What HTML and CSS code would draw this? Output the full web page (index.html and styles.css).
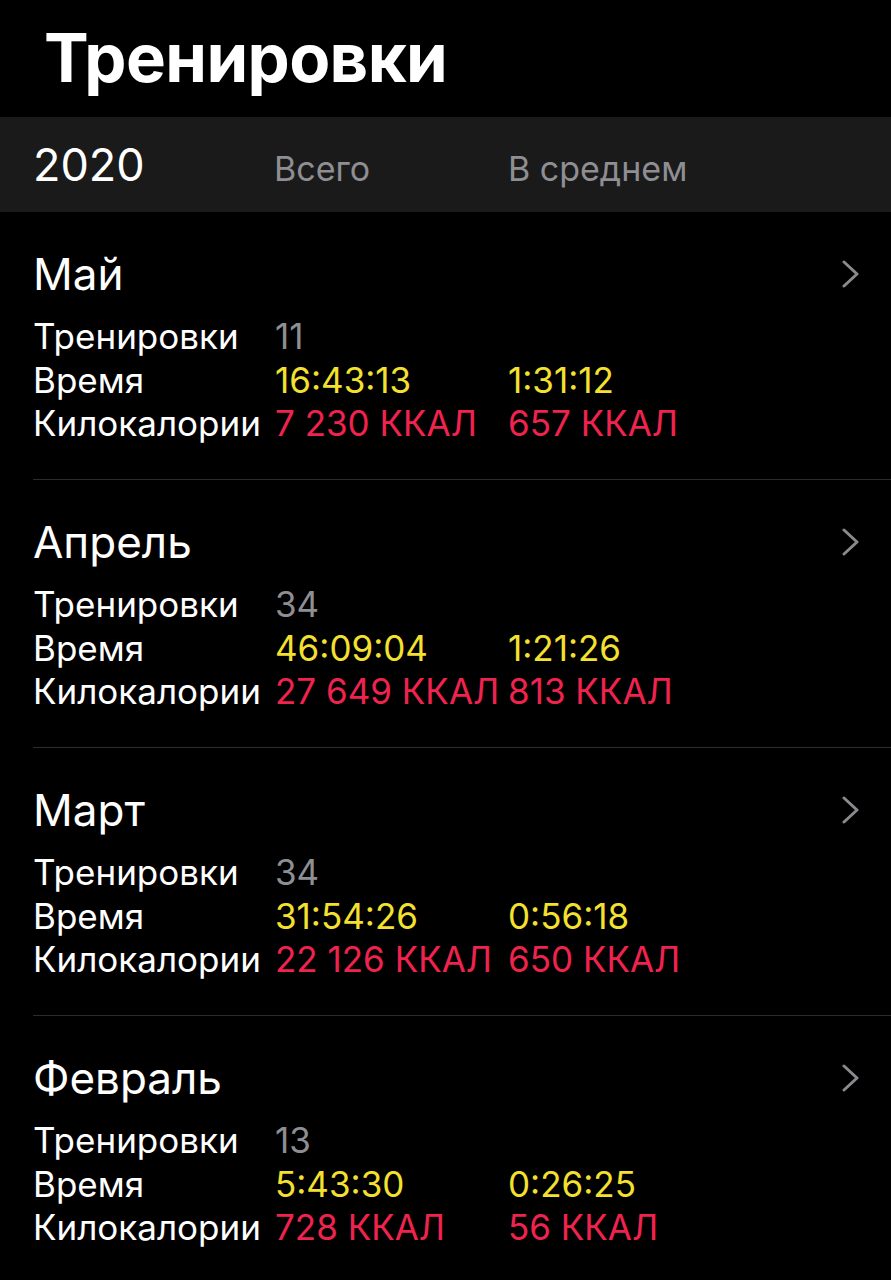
FILE: index.html
```html
<!DOCTYPE html>
<html lang="ru">
<head>
<meta charset="utf-8">
<title>Тренировки</title>
<link rel="stylesheet" href="styles.css">
</head>
<body>
<h1 class="title">Тренировки</h1>
<div class="band">
  <span class="year">2020</span>
  <span class="band-col">Всего</span>
  <span class="band-col">В среднем</span>
</div>
<main class="list">
  <section class="month">
    <div class="month-head"><span class="month-name">Май</span><svg class="chev" viewBox="0 0 20 28"><path d="M3 2 L16 14 L3 26"/></svg></div>
    <div class="stats">
      <span class="lbl">Тренировки</span><span class="cnt">11</span><span></span>
      <span class="lbl">Время</span><span class="time">16:43:13</span><span class="time">1:31:12</span>
      <span class="lbl">Килокалории</span><span class="kcal">7 230 ККАЛ</span><span class="kcal">657 ККАЛ</span>
    </div>
  </section>
  <section class="month">
    <div class="month-head"><span class="month-name">Апрель</span><svg class="chev" viewBox="0 0 20 28"><path d="M3 2 L16 14 L3 26"/></svg></div>
    <div class="stats">
      <span class="lbl">Тренировки</span><span class="cnt">34</span><span></span>
      <span class="lbl">Время</span><span class="time">46:09:04</span><span class="time">1:21:26</span>
      <span class="lbl">Килокалории</span><span class="kcal">27 649 ККАЛ</span><span class="kcal">813 ККАЛ</span>
    </div>
  </section>
  <section class="month">
    <div class="month-head"><span class="month-name">Март</span><svg class="chev" viewBox="0 0 20 28"><path d="M3 2 L16 14 L3 26"/></svg></div>
    <div class="stats">
      <span class="lbl">Тренировки</span><span class="cnt">34</span><span></span>
      <span class="lbl">Время</span><span class="time">31:54:26</span><span class="time">0:56:18</span>
      <span class="lbl">Килокалории</span><span class="kcal">22 126 ККАЛ</span><span class="kcal">650 ККАЛ</span>
    </div>
  </section>
  <section class="month">
    <div class="month-head"><span class="month-name">Февраль</span><svg class="chev" viewBox="0 0 20 28"><path d="M3 2 L16 14 L3 26"/></svg></div>
    <div class="stats">
      <span class="lbl">Тренировки</span><span class="cnt">13</span><span></span>
      <span class="lbl">Время</span><span class="time">5:43:30</span><span class="time">0:26:25</span>
      <span class="lbl">Килокалории</span><span class="kcal">728 ККАЛ</span><span class="kcal">56 ККАЛ</span>
    </div>
  </section>
</main>
</body>
</html>
```

FILE: styles.css
```css
* { box-sizing: border-box; }
html, body {
  margin: 0;
  padding: 0;
  background: #000;
  color: #fff;
  font-family: Inter, "Noto Sans", "Liberation Sans", sans-serif;
}
.title {
  margin: 0;
  padding: 17px 0 0 44px;
  height: 117px;
  font-size: 67px;
  font-weight: 700;
  line-height: 82px;
  letter-spacing: -0.6px;
}
.band {
  height: 95px;
  background: #1a1a1a;
  display: flex;
  align-items: baseline;
  padding: 20px 0 0 33px;
}
.year {
  width: 241px;
  font-size: 45px;
  line-height: 56px;
  color: #fff;
}
.band-col {
  width: 234px;
  font-size: 34px;
  color: #8e8e93;
}
.month {
  margin-left: 33px;
  height: 268px;
  border-bottom: 1px solid #2c2c2e;
  padding-top: 36px;
}
.month:last-child { border-bottom: none; }
.month-head {
  display: flex;
  align-items: center;
  justify-content: space-between;
  height: 52px;
  padding-right: 30px;
}
.month-name {
  font-size: 44px;
  line-height: 52px;
}
.chev {
  width: 20px;
  height: 28px;
}
.chev path {
  fill: none;
  stroke: #8a8a8e;
  stroke-width: 3;
  stroke-linecap: round;
  stroke-linejoin: round;
}
.stats {
  margin-top: 15px;
  display: grid;
  grid-template-columns: 242px 233px auto;
  font-size: 35px;
  line-height: 43.5px;
}
.lbl { color: #fff; }
.cnt { color: #8e8e93; }
.time { color: #f4e12f; }
.kcal { color: #f0234f; }
```
